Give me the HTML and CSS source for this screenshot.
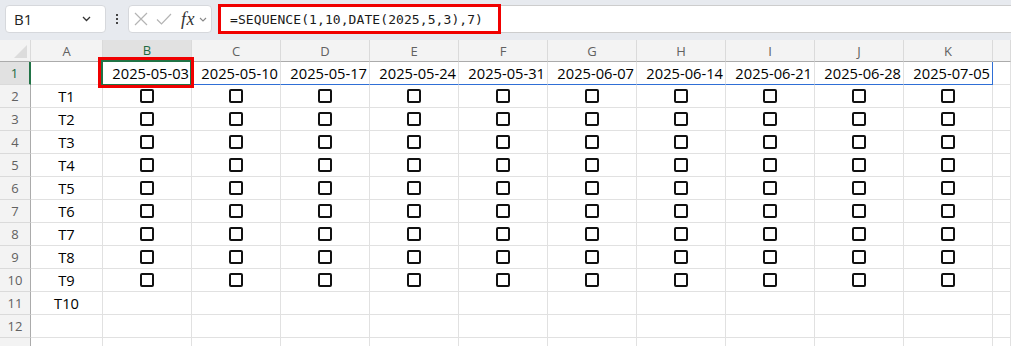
FILE: index.html
```html
<!DOCTYPE html>
<html lang="en">

<head>
    <meta charset="UTF-8">
    <meta name="viewport" content="width=device-width, initial-scale=1.0">
    <title>SEQUENCE checklist</title>
    <link rel="stylesheet" href="styles.css">
</head>

<body>
    <div class="toolbar">
        <div class="namebox">
            <span>B1</span>
            <svg width="9" height="6" viewBox="0 0 9 6"><path d="M1 1l3.5 3.5L8 1" fill="none" stroke="#333" stroke-width="1.3"/></svg>
        </div>
        <div class="kebab"><i></i><i></i><i></i></div>
        <div class="fxbox">
            <svg width="14" height="14" viewBox="0 0 14 14"><path d="M1 1l12 12M13 1L1 13" stroke="#b4b4b4" stroke-width="1.2"/></svg>
            <svg width="16" height="12" viewBox="0 0 16 12"><path d="M1 6.5l4.5 4.5L15 1" fill="none" stroke="#b4b4b4" stroke-width="1.2"/></svg>
            <span class="fx">fx</span>
            <svg width="8" height="5" viewBox="0 0 8 5"><path d="M1 1l3 3 3-3" fill="none" stroke="#888" stroke-width="1.1"/></svg>
        </div>
        <div class="formula">
            <span>=SEQUENCE(1,10,DATE(2025,5,3),7)</span>
            <div class="mark mark-formula"></div>
        </div>
    </div>

    <div class="sheet">
        <!-- header -->
        <div class="corner"></div>
        <div class="colh">A</div>
        <div class="colh sel">B</div>
        <div class="colh">C</div>
        <div class="colh">D</div>
        <div class="colh">E</div>
        <div class="colh">F</div>
        <div class="colh">G</div>
        <div class="colh">H</div>
        <div class="colh">I</div>
        <div class="colh">J</div>
        <div class="colh">K</div>
        <div class="colh"></div>

        <!-- row 1 -->
        <div class="rowh sel">1</div>
        <div class="c"></div>
        <div class="c date spill active">2025-05-03<div class="cursor"></div><div class="mark mark-cell"></div></div>
        <div class="c date spill">2025-05-10</div>
        <div class="c date spill">2025-05-17</div>
        <div class="c date spill">2025-05-24</div>
        <div class="c date spill">2025-05-31</div>
        <div class="c date spill">2025-06-07</div>
        <div class="c date spill">2025-06-14</div>
        <div class="c date spill">2025-06-21</div>
        <div class="c date spill">2025-06-28</div>
        <div class="c date spill last">2025-07-05</div>
        <div class="c"></div>

        <!-- rows 2-10 -->
        <div class="rowh">2</div>
        <div class="c task">T1</div>
        <div class="c"><i class="cb"></i></div><div class="c"><i class="cb"></i></div><div class="c"><i class="cb"></i></div><div class="c"><i class="cb"></i></div><div class="c"><i class="cb"></i></div>
        <div class="c"><i class="cb"></i></div><div class="c"><i class="cb"></i></div><div class="c"><i class="cb"></i></div><div class="c"><i class="cb"></i></div><div class="c"><i class="cb"></i></div>
        <div class="c"></div>

        <div class="rowh">3</div>
        <div class="c task">T2</div>
        <div class="c"><i class="cb"></i></div><div class="c"><i class="cb"></i></div><div class="c"><i class="cb"></i></div><div class="c"><i class="cb"></i></div><div class="c"><i class="cb"></i></div>
        <div class="c"><i class="cb"></i></div><div class="c"><i class="cb"></i></div><div class="c"><i class="cb"></i></div><div class="c"><i class="cb"></i></div><div class="c"><i class="cb"></i></div>
        <div class="c"></div>

        <div class="rowh">4</div>
        <div class="c task">T3</div>
        <div class="c"><i class="cb"></i></div><div class="c"><i class="cb"></i></div><div class="c"><i class="cb"></i></div><div class="c"><i class="cb"></i></div><div class="c"><i class="cb"></i></div>
        <div class="c"><i class="cb"></i></div><div class="c"><i class="cb"></i></div><div class="c"><i class="cb"></i></div><div class="c"><i class="cb"></i></div><div class="c"><i class="cb"></i></div>
        <div class="c"></div>

        <div class="rowh">5</div>
        <div class="c task">T4</div>
        <div class="c"><i class="cb"></i></div><div class="c"><i class="cb"></i></div><div class="c"><i class="cb"></i></div><div class="c"><i class="cb"></i></div><div class="c"><i class="cb"></i></div>
        <div class="c"><i class="cb"></i></div><div class="c"><i class="cb"></i></div><div class="c"><i class="cb"></i></div><div class="c"><i class="cb"></i></div><div class="c"><i class="cb"></i></div>
        <div class="c"></div>

        <div class="rowh">6</div>
        <div class="c task">T5</div>
        <div class="c"><i class="cb"></i></div><div class="c"><i class="cb"></i></div><div class="c"><i class="cb"></i></div><div class="c"><i class="cb"></i></div><div class="c"><i class="cb"></i></div>
        <div class="c"><i class="cb"></i></div><div class="c"><i class="cb"></i></div><div class="c"><i class="cb"></i></div><div class="c"><i class="cb"></i></div><div class="c"><i class="cb"></i></div>
        <div class="c"></div>

        <div class="rowh">7</div>
        <div class="c task">T6</div>
        <div class="c"><i class="cb"></i></div><div class="c"><i class="cb"></i></div><div class="c"><i class="cb"></i></div><div class="c"><i class="cb"></i></div><div class="c"><i class="cb"></i></div>
        <div class="c"><i class="cb"></i></div><div class="c"><i class="cb"></i></div><div class="c"><i class="cb"></i></div><div class="c"><i class="cb"></i></div><div class="c"><i class="cb"></i></div>
        <div class="c"></div>

        <div class="rowh">8</div>
        <div class="c task">T7</div>
        <div class="c"><i class="cb"></i></div><div class="c"><i class="cb"></i></div><div class="c"><i class="cb"></i></div><div class="c"><i class="cb"></i></div><div class="c"><i class="cb"></i></div>
        <div class="c"><i class="cb"></i></div><div class="c"><i class="cb"></i></div><div class="c"><i class="cb"></i></div><div class="c"><i class="cb"></i></div><div class="c"><i class="cb"></i></div>
        <div class="c"></div>

        <div class="rowh">9</div>
        <div class="c task">T8</div>
        <div class="c"><i class="cb"></i></div><div class="c"><i class="cb"></i></div><div class="c"><i class="cb"></i></div><div class="c"><i class="cb"></i></div><div class="c"><i class="cb"></i></div>
        <div class="c"><i class="cb"></i></div><div class="c"><i class="cb"></i></div><div class="c"><i class="cb"></i></div><div class="c"><i class="cb"></i></div><div class="c"><i class="cb"></i></div>
        <div class="c"></div>

        <div class="rowh">10</div>
        <div class="c task">T9</div>
        <div class="c"><i class="cb"></i></div><div class="c"><i class="cb"></i></div><div class="c"><i class="cb"></i></div><div class="c"><i class="cb"></i></div><div class="c"><i class="cb"></i></div>
        <div class="c"><i class="cb"></i></div><div class="c"><i class="cb"></i></div><div class="c"><i class="cb"></i></div><div class="c"><i class="cb"></i></div><div class="c"><i class="cb"></i></div>
        <div class="c"></div>

        <!-- rows 11-13 -->
        <div class="rowh">11</div>
        <div class="c task">T10</div>
        <div class="c"></div><div class="c"></div><div class="c"></div><div class="c"></div><div class="c"></div>
        <div class="c"></div><div class="c"></div><div class="c"></div><div class="c"></div><div class="c"></div>
        <div class="c"></div>

        <div class="rowh">12</div>
        <div class="c"></div>
        <div class="c"></div><div class="c"></div><div class="c"></div><div class="c"></div><div class="c"></div>
        <div class="c"></div><div class="c"></div><div class="c"></div><div class="c"></div><div class="c"></div>
        <div class="c"></div>

        <!-- next row only shows its top edge -->
        <div class="rowh"></div>
        <div class="c"></div>
        <div class="c"></div><div class="c"></div><div class="c"></div><div class="c"></div><div class="c"></div>
        <div class="c"></div><div class="c"></div><div class="c"></div><div class="c"></div><div class="c"></div>
        <div class="c"></div>
    </div>
</body>

</html>
```

FILE: styles.css
```css
html,
body {
    margin: 0;
}

body {
    width: 1011px;
    height: 346px;
    overflow: hidden;
    background: #fff;
    font-family: "Open Sans", "Noto Sans", sans-serif;
    color: #000;
}

/* formula bar */
.toolbar {
    height: 40px;
    box-sizing: border-box;
    padding: 5px 0 7px 5px;
    display: flex;
    background: #e7eaef;
}

.namebox {
    width: 101px;
    box-sizing: border-box;
    display: flex;
    align-items: center;
    justify-content: space-between;
    padding: 0 14px 0 8px;
    background: #fff;
    border: 1px solid #d6d8dc;
    border-radius: 4px;
    font-size: 15px;
    color: #222;
}

.kebab {
    width: 22px;
    display: flex;
    flex-direction: column;
    align-items: center;
    justify-content: center;
    gap: 2px;
}

.kebab i {
    width: 2px;
    height: 2px;
    background: #444;
}

.fxbox {
    width: 84px;
    box-sizing: border-box;
    display: flex;
    align-items: center;
    padding: 0 3px 0 5px;
    background: #fff;
    border: 1px solid #d6d8dc;
    border-radius: 4px;
}

.fxbox svg:nth-child(2) {
    margin-left: 8px;
}

.fxbox .fx {
    margin-left: 9px;
    margin-right: 4px;
    font-family: "Liberation Serif", serif;
    font-style: italic;
    font-size: 18px;
    color: #333;
    letter-spacing: 0.5px;
}

.formula {
    position: relative;
    flex: 1;
    margin-left: 6px;
    display: flex;
    align-items: center;
    padding-left: 12px;
    background: #fff;
    border-top: 1px solid #cdcdcd;
    border-bottom: 1px solid #cdcdcd;
    font-family: "DejaVu Sans Mono", monospace;
    font-size: 13px;
    letter-spacing: 0.08px;
    color: #1a1a1a;
}

/* red highlight boxes */
.mark {
    position: absolute;
    box-sizing: border-box;
    border: 3px solid #f00000;
    pointer-events: none;
}

.mark-formula {
    left: 0;
    top: -2px;
    width: 283px;
    bottom: -2px;
}

.mark-cell {
    left: -5px;
    top: -5px;
    right: -3px;
    bottom: -4px;
}

/* sheet grid */
.sheet {
    display: grid;
    grid-template-columns: 31px 72px repeat(10, 89px) 1fr;
    grid-template-rows: 22px;
    grid-auto-rows: 23px;
}

.sheet > div {
    box-sizing: border-box;
    border-right: 1px solid #e1e1e1;
    border-bottom: 1px solid #e1e1e1;
}

.corner {
    position: relative;
    background: #f3f3f3;
}

.corner::after {
    content: "";
    position: absolute;
    right: 3px;
    bottom: 3px;
    width: 13px;
    height: 13px;
    background: #dcdcdc;
    clip-path: polygon(100% 0, 100% 100%, 0 100%);
}

.colh {
    display: flex;
    align-items: center;
    justify-content: center;
    background: #f3f3f3;
    font-size: 13px;
    color: #616161;
}

.sheet > .colh,
.sheet > .corner {
    border-bottom-color: #ababab;
    border-right-color: #dadada;
}

.rowh {
    display: flex;
    align-items: center;
    justify-content: center;
    background: #f3f3f3;
    font-size: 13px;
    color: #616161;
}

.sheet > .rowh {
    border-right-color: #ababab;
    border-bottom-color: #dadada;
}

.colh.sel,
.rowh.sel {
    background: #e1e1e1;
    color: #1e6b41;
}

.sheet > .colh.sel {
    border-bottom: 2px solid #217346;
}

.sheet > .rowh.sel {
    border-right: 2px solid #217346;
}

.c {
    display: flex;
    align-items: center;
    justify-content: center;
    font-size: 14.7px;
}

.date {
    justify-content: flex-end;
    padding-right: 2px;
}

.sheet > .spill {
    border-bottom-color: #2f6fd6;
}

.sheet > .spill.last {
    border-right-color: #2f6fd6;
}

.active {
    position: relative;
}

.cursor {
    position: absolute;
    left: -2px;
    top: -2px;
    right: -1px;
    bottom: -2px;
    border: 2px solid #217346;
}

.cb {
    width: 14px;
    height: 14px;
    box-sizing: border-box;
    border: 2px solid #111;
    border-radius: 2px;
}
```
